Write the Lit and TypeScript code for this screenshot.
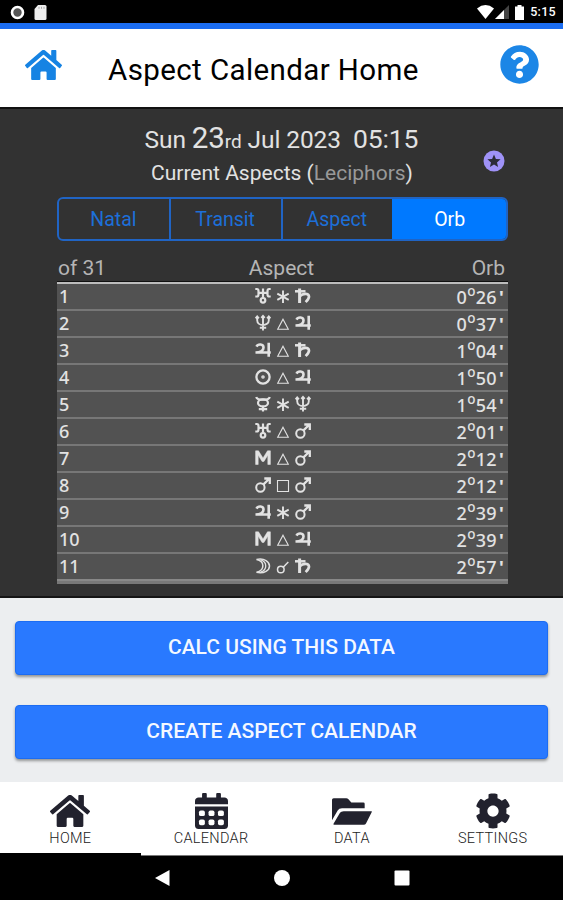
import { LitElement, html, css, svg } from "lit";
import { customElement, property } from "lit/decorators.js";

const HOME = "M280.37 148.26L96 300.11V464a16 16 0 0 0 16 16l112.06-.29a16 16 0 0 0 15.92-16V368a16 16 0 0 1 16-16h64a16 16 0 0 1 16 16v95.64a16 16 0 0 0 16 16.05L464 480a16 16 0 0 0 16-16V300L295.67 148.26a12.19 12.19 0 0 0-15.3 0zM571.6 251.47L488 182.56V44.05a12 12 0 0 0-12-12h-56a12 12 0 0 0-12 12v72.61L318.47 43a48 48 0 0 0-61 0L4.34 251.47a12 12 0 0 0-1.6 16.9l25.5 31A12 12 0 0 0 45.15 301l235.22-193.74a12.19 12.19 0 0 1 15.3 0L530.9 301a12 12 0 0 0 16.9-1.6l25.5-31a12 12 0 0 0-1.7-16.93z";
const HELP = "M504 256c0 136.997-111.043 248-248 248S8 392.997 8 256C8 119.083 119.043 8 256 8s248 111.083 248 248zM262.655 90c-54.497 0-89.255 22.957-116.549 63.758-3.536 5.286-2.353 12.415 2.715 16.258l34.699 26.31c5.205 3.947 12.621 3.008 16.665-2.122 17.864-22.658 30.113-35.797 57.303-35.797 20.429 0 45.698 13.148 45.698 32.958 0 14.976-12.363 22.667-32.534 33.976C247.128 238.528 216 254.941 216 296v4c0 6.627 5.373 12 12 12h56c6.627 0 12-5.373 12-12v-1.333c0-28.462 83.186-29.647 83.186-106.667 0-58.002-60.165-102-116.531-102zM256 338c-25.365 0-46 20.635-46 46 0 25.364 20.635 46 46 46s46-20.636 46-46c0-25.365-20.635-46-46-46z";
const FOLDER = "M0 66V5Q0 0 5 0H43Q46 0 48 2L58 13H94Q98 13 98 17V30H30Q21 30 17 37zM35 39H118Q121 39 119 42L102 76Q100 80 95 80H6Q3 80 5 76L24 44Q27 39 35 39z";
const COG = "M487.4 315.7l-42.6-24.6c4.3-23.2 4.3-47 0-70.2l42.6-24.6c4.9-2.8 7.1-8.6 5.5-14-11.1-35.6-30-67.8-54.7-94.6-3.8-4.1-10-5.1-14.8-2.3L380.8 110c-17.9-15.4-38.5-27.3-60.8-35.1V25.8c0-5.6-3.9-10.5-9.4-11.7-36.7-8.2-74.3-7.8-109.2 0-5.5 1.2-9.4 6.1-9.4 11.7V75c-22.2 7.9-42.8 19.8-60.8 35.1L88.7 85.5c-4.9-2.8-11-1.9-14.8 2.3-24.7 26.7-43.6 58.9-54.7 94.6-1.7 5.4.6 11.2 5.5 14L67.3 221c-4.3 23.2-4.3 47 0 70.2l-42.6 24.6c-4.9 2.8-7.1 8.6-5.5 14 11.1 35.6 30 67.8 54.7 94.6 3.8 4.1 10 5.1 14.8 2.3l42.6-24.6c17.9 15.4 38.5 27.3 60.8 35.1v49.2c0 5.6 3.9 10.5 9.4 11.7 36.7 8.2 74.3 7.8 109.2 0 5.5-1.2 9.4-6.1 9.4-11.7v-49.2c22.2-7.9 42.8-19.8 60.8-35.1l42.6 24.6c4.9 2.8 11 1.9 14.8-2.3 24.7-26.7 43.6-58.9 54.7-94.6 1.5-5.5-.7-11.3-5.6-14.1zM256 336c-44.1 0-80-35.9-80-80s35.9-80 80-80 80 35.9 80 80-35.9 80-80 80z";
const CALENDAR = "M0 464c0 26.500 21.500 48 48 48h352c26.500 0 48-21.500 48-48V192H0zM400 64h-48V16c0-8.800-7.200-16-16-16h-32c-8.800 0-16 7.200-16 16v48H160V16c0-8.800-7.200-16-16-16h-32c-8.800 0-16 7.200-16 16v48H48C21.500 64 0 85.500 0 112v48h448v-48c0-26.500-21.500-48-48-48z";

const GLYPHS: Record<string, unknown> = {
  uranus: svg`<path d="M.3 1h1.500q1.700 0 1.700 2v3.500q0 2-1.700 2H.3M15.700 1h-1.500q-1.700 0-1.700 2v3.500q0 2 1.700 2h1.500M3.500 4.800h9M8 .5v9.500"/><circle cx="8" cy="12.300" r="2.300"/>`,
  saturn: svg`<path d="M0 3.300h10.500" stroke-width="2.500"/><path d="M4.600 .5V15" stroke-width="3"/><path d="M5 8C7.500 5.300 13.700 4.800 14 8.500c.1 2-1.300 3.400-3.300 5.600" stroke-width="2.700"/>`,
  neptune: svg`<path d="M2.200 2.200v3c0 6.500 11.600 6.500 11.600 0v-3M8 1v14.500M4.800 12.700h6.400M.6 3.300l1.600-1.900 1.700 1.900M6.300 2.800L8 1l1.700 1.800M12.100 3.300l1.700-1.900 1.600 1.900" stroke-width="1.900"/>`,
  jupiter: svg`<path d="M1.500 4.600C3 1.600 8.500 1.800 8.500 5.400 8.500 8.500 5.500 10.300 .5 10.500h15.300M13.700.8v14" stroke-width="2.600"/>`,
  sun: svg`<circle cx="8" cy="8" r="6.600" stroke-width="2.300"/><circle cx="8" cy="8" r=".7"/>`,
  mercury: svg`<path d="M1.200 1c.8 3.600 12.800 3.600 13.600 0M8 10.700v4.800M3.800 13.200h8.400"/><ellipse cx="8" cy="6.900" rx="5" ry="3.500"/>`,
  mars: svg`<circle cx="5.400" cy="10.500" r="4.200" stroke-width="2"/><path d="M8.500 7.400L14 2M9.300 1.500h5.500v5.400" stroke-width="2.300"/>`,
  midheaven: svg`<path d="M.6 14.500V.8h2.900L8 8l4.500-7.200h2.900v13.700h-2.600V5.200L8.900 11.500H7.100L3.200 5.200v9.300z" fill="#e2e2e2" stroke-width=".5"/>`,
  moon: svg`<path d="M1.500 1.500c8-1.700 13 2.300 13 6.400S9.500 16 1.500 14.300c8.500-1.700 8.500-11.300 0-12.800z" stroke-width="1.500"/><path d="M5.500 1.700c7 2.500 7 10 0 12.500" stroke-width="1.300"/>`,
  sextile: svg`<path d="M8 2.500v12.500M2.300 5.700l11.400 6.200M13.700 5.700L2.300 11.900" stroke-width="1.900"/>`,
  trine: svg`<path d="M8 4.200L13.300 14.300H2.700z" stroke-width="1.100"/>`,
  square: svg`<path d="M2.500 3.500h11v11h-11z" stroke-width="1.100"/>`,
  conjunction: svg`<circle cx="5.800" cy="11.500" r="3.300" stroke-width="1.500"/><path d="M8.200 9.200L13.300 4" stroke-width="1.500"/>`,
};

const ROWS: [string, string, string, string, string][] = [
  ["uranus", "sextile", "saturn", "0", "26"],
  ["neptune", "trine", "jupiter", "0", "37"],
  ["jupiter", "trine", "saturn", "1", "04"],
  ["sun", "trine", "jupiter", "1", "50"],
  ["mercury", "sextile", "neptune", "1", "54"],
  ["uranus", "trine", "mars", "2", "01"],
  ["midheaven", "trine", "mars", "2", "12"],
  ["mars", "square", "mars", "2", "12"],
  ["jupiter", "sextile", "mars", "2", "39"],
  ["midheaven", "trine", "jupiter", "2", "39"],
  ["moon", "conjunction", "saturn", "2", "57"],
];

@customElement("astro-glyph")
class AstroGlyph extends LitElement {
  @property() name = "";
  static styles = css`
    :host { display: block; width: 16px; height: 16px; }
    svg { display: block; fill: none; stroke: #e2e2e2; stroke-width: 2.200; overflow: visible; }
  `;
  render() {
    return html`<svg width="16" height="16" viewBox="0 0 16 16">${GLYPHS[this.name]}</svg>`;
  }
}

@customElement("app-root")
class AppRoot extends LitElement {
  static styles = css`
    :host { display: flex; flex-direction: column; width: 563px; height: 900px; overflow: hidden; background: #eceef0; font-family: Roboto, sans-serif; color: #000; }
    * { box-sizing: border-box; }
    svg { display: block; flex: none; }
    .status { height: 23px; background: #000; display: flex; align-items: center; padding: 1px 7px 0 10px; color: #fff; font-size: 12.500px; font-weight: 500; }
    .status .left { display: flex; gap: 9px; flex: 1; }
    .status .right { display: flex; align-items: center; }
    .clock { margin-left: 5px; line-height: 14px; letter-spacing: .3px; }
    header { height: 86px; border-top: 6px solid #1b6df2; border-bottom: 2px solid #111; background: #fff; display: flex; align-items: flex-start; padding: 0 24px 0 25px; }
    .homeicon { margin-top: 21px; fill: #1683e3; }
    h1 { margin: 23px 0 0 46px; font-size: 29.500px; line-height: 36px; font-weight: 400; letter-spacing: .4px; flex: 1; white-space: nowrap; }
    .help { margin-top: 16px; fill: #1c86e6; }
    .panel { position: relative; height: 489px; background: #323232; border-bottom: 2px solid #151515; padding: 10px 55px 0 57px; color: #e2e2e2; }
    .date { height: 38px; line-height: 38px; text-align: center; font-size: 24.500px; white-space: pre; letter-spacing: -.1px; padding-right: 2px; }
    .date .day { font-size: 29.500px; }
    .date .ord { font-size: 19px; }
    .date .time { font-size: 26.500px; }
    .sub { height: 32px; line-height: 33px; text-align: center; font-size: 21px; padding-right: 1px; }
    .sub span { color: #999; }
    .star { position: absolute; left: 483px; top: 41px; }
    .tabs { margin-top: 8px; height: 44px; display: grid; grid-template-columns: repeat(4, 1fr); border: 2px solid #2064c4; border-radius: 6px; overflow: hidden; }
    .tab { display: flex; align-items: center; justify-content: center; font-size: 19.500px; color: #1d6fd8; border-right: 2px solid #2064c4; padding-right: 1px; }
    .tabs .on { background: #0079ff; color: #fff; border: 0; margin: -2px; }
    .head { display: grid; grid-template-columns: 1fr 1fr 1fr; height: 41px; padding: 13px 3px 0 1px; font-size: 21px; line-height: 28px; color: #b5b5b5; border-bottom: 1px solid #111; }
    .head span:nth-child(2) { text-align: center; }
    .head span:nth-child(3) { text-align: right; }
    .list { border-top: 2px solid #bdbdbd; border-bottom: 3px solid #777; background: #525252; font-family: "Noto Sans", sans-serif; font-size: 18px; font-weight: 500; }
    .row { display: grid; grid-template-columns: 1fr auto 1fr; height: 27px; border-bottom: 2px solid #777; padding: 0 4px 0 2px; line-height: 24px; }
    .row:last-child { border-bottom-color: #888; }
    .glyphs { display: flex; gap: 4px; padding: 4px 0 0 2px; }
    .orb { text-align: right; letter-spacing: .3px; line-height: 27px; }
    .deg { display: inline-block; font-size: 13.500px; line-height: 10px; transform: translateY(-8px); }
    .min { margin-left: 2px; font-weight: 700; }
    .actions { flex: 1; padding: 23px 15px 0; display: flex; flex-direction: column; gap: 30px; }
    .btn { height: 54px; border-radius: 4px; background: #2979ff; border: 1px solid #1c6cf2; box-shadow: 0 2px 3px rgba(0,0,0,.38); color: #f4f8ff; font-size: 21px; font-weight: 500; line-height: 51px; text-align: center; }
    nav { height: 74px; background: #fff; display: grid; grid-template-columns: repeat(4, 1fr); }
    .item { border-bottom: 1px solid #777; display: flex; flex-direction: column; align-items: center; padding-top: 10px; font-size: 14.500px; line-height: 18px; font-weight: 300; letter-spacing: .3px; color: #222; }
    .item.on { border-bottom: 3px solid #000; }
    .pic { height: 38px; display: flex; align-items: center; fill: #22222e; }
    .sys { height: 44px; background: #000; display: flex; align-items: center; justify-content: center; gap: 104px; padding-left: 2px; }
  `;

  navIcon(kind: string) {
    switch (kind) {
      case "HOME": return html`<svg width="40" height="32" viewBox="0 32 576 448" preserveAspectRatio="none"><path d=${HOME}/></svg>`;
      case "CALENDAR": return html`<svg width="33" height="36" viewBox="0 0 448 512" preserveAspectRatio="none"><path d=${CALENDAR}/>${[54, 184, 312].map(x => [248, 378].map(y => svg`<rect x=${x} y=${y} width="80" height="80" rx="24" fill="#fff"/>`))}</svg>`;
      case "DATA": return html`<svg width="40" height="27" viewBox="0 0 120 80"><path d=${FOLDER}/></svg>`;
      default: return html`<svg width="36" height="36" viewBox="0 0 512 512"><path d=${COG}/></svg>`;
    }
  }

  render() {
    return html`
      <div class="status">
        <div class="left">
          <svg width="15" height="15" viewBox="0 0 15 15"><circle cx="7.500" cy="7.500" r="5.500" fill="#555" stroke="#fff" stroke-width="2.600"/></svg>
          <svg width="13" height="15" viewBox="0 0 13 15"><path d="M4 0h7q1.500 0 1.500 1.500v12q0 1.500-1.500 1.500H2q-1.500 0-1.500-1.500V4z" fill="#eee"/><path d="M5 1.800v2M7.500 1.800v2M10 1.800v2" stroke="#aaa"/></svg>
        </div>
        <div class="right">
          <svg width="17" height="14" viewBox="0 0 17 14"><path d="M0 3.500Q8.500-3.300 17 3.500L8.500 14z" fill="#fff"/></svg>
          <svg width="15" height="14" viewBox="0 0 15 14"><path d="M15 0v14H1z" fill="#444"/><path d="M10 5v9H1z" fill="#fff"/></svg>
          <svg width="16" height="15" viewBox="0 0 16 15"><path d="M8.500 0h4v1.500H15V15H6V1.500h2.500z" fill="#fff"/></svg>
          <span class="clock">5:15</span>
        </div>
      </div>
      <header>
        <svg class="homeicon" width="37" height="30" viewBox="0 32 576 448" preserveAspectRatio="none"><path d=${HOME}/></svg>
        <h1>Aspect Calendar Home</h1>
        <svg class="help" width="39" height="39" viewBox="4 4 504 504"><path d=${HELP}/></svg>
      </header>
      <section class="panel">
        <div class="date">Sun <span class="day">23</span><span class="ord">rd</span> Jul 2023  <span class="time">05:15</span></div>
        <div class="sub">Current Aspects (<span>Leciphors</span>)</div>
        <svg class="star" width="22" height="22" viewBox="0 0 22 22"><circle cx="11" cy="11" r="10.500" fill="#9f92f7"/><path d="M11 4.500l1.900 4.400 4.700.4-3.600 3.100 1.100 4.700-4.100-2.500-4.100 2.500L8 12.400 4.400 9.300l4.700-.4z" fill="#2b2b38"/></svg>
        <div class="tabs">${["Natal", "Transit", "Aspect", "Orb"].map(t => html`<div class="tab ${t === "Orb" ? "on" : ""}">${t}</div>`)}</div>
        <div class="head"><span>of 31</span><span>Aspect</span><span>Orb</span></div>
        <div class="list">
          ${ROWS.map((r, i) => html`<div class="row">
            <span>${i + 1}</span>
            <div class="glyphs">${r.slice(0, 3).map(g => html`<astro-glyph name=${g}></astro-glyph>`)}</div>
            <span class="orb">${r[3]}<span class="deg">o</span>${r[4]}<span class="min">'</span></span>
          </div>`)}
        </div>
      </section>
      <div class="actions">
        <div class="btn">CALC USING THIS DATA</div>
        <div class="btn">CREATE ASPECT CALENDAR</div>
      </div>
      <nav>${["HOME", "CALENDAR", "DATA", "SETTINGS"].map(k => html`<div class="item ${k === "HOME" ? "on" : ""}"><div class="pic">${this.navIcon(k)}</div>${k}</div>`)}</nav>
      <div class="sys">
        <svg width="15" height="16" viewBox="0 0 15 16"><path d="M14.500 0v16L0 8z" fill="#fff"/></svg>
        <svg width="16" height="16" viewBox="0 0 16 16"><circle cx="8" cy="8" r="8" fill="#fff"/></svg>
        <svg width="16" height="16" viewBox="0 0 16 16"><rect x=".5" y=".5" width="15" height="15" rx="1" fill="#fff"/></svg>
      </div>`;
  }
}
